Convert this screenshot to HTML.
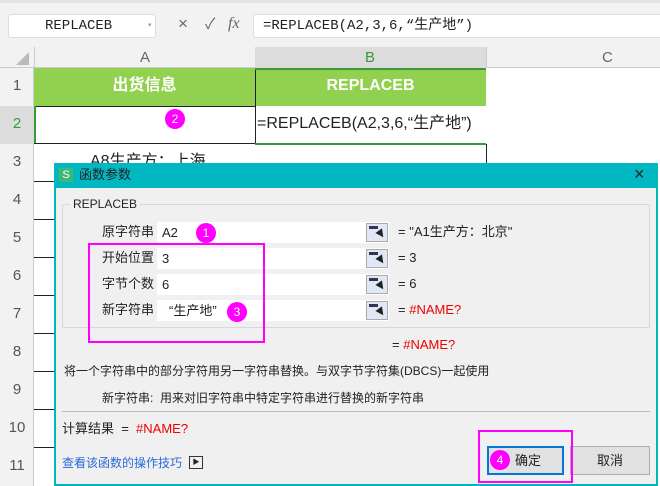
<!DOCTYPE html>
<html><head><meta charset="utf-8"><style>
*{margin:0;padding:0;box-sizing:border-box}
body{width:660px;height:486px;overflow:hidden;background:#fff;font-family:"Liberation Sans","Noto Sans CJK SC",sans-serif;position:relative;font-size:13px;color:#222;line-height:16px}
.a{position:absolute}
.c{position:absolute;border-radius:50%;background:#f0f;color:#fff;width:20px;height:20px;text-align:center;line-height:20px;font-size:12px}
.rn{position:absolute;left:0;width:34px;text-align:center;color:#555;font-size:15px;line-height:18px}
.lab{position:absolute;left:102px;font-size:13px;line-height:16px}
.inp{position:absolute;left:157px;width:232px;height:21px;background:#fff;font-size:13px;line-height:21px;padding-left:5px}
.btn{position:absolute;left:366px;width:22px;height:19px;background:#dfe8f4;border:1px solid #aaa}
.btn:before{content:"";position:absolute;left:2px;top:2px;width:9px;height:3px;background:#335}
.btn:after{content:"";position:absolute;left:10px;top:6px;width:0;height:0;border-left:4px solid transparent;border-right:4px solid transparent;border-top:8px solid #222;transform:rotate(-35deg)}
.eq{position:absolute;left:398px;font-size:13px;line-height:16px}
.red{color:#e00}
</style></head><body>
<div class="a" style="left:0;top:0;width:660px;height:47px;background:#f2f2f2"></div>
<div class="a" style="left:0;top:0;width:660px;height:3px;background:#e4e4e4"></div>
<div class="a" style="left:8px;top:14px;width:148px;height:24px;background:#fff;border:1px solid #ddd;border-radius:3px;font-family:'Liberation Mono',monospace;font-size:14px;line-height:22px;padding-left:36px">REPLACEB</div>
<div class="a" style="left:148px;top:18px;font-size:7px;color:#999">▾</div>
<div class="a" style="left:178px;top:16px;font-size:17px;color:#666">×</div>
<div class="a" style="left:205px;top:17px;font-size:15px;color:#666">✓</div>
<div class="a" style="left:228px;top:16px;font-size:16px;color:#666;font-style:italic;font-family:'Liberation Serif',serif">fx</div>
<div class="a" style="left:253px;top:14px;width:410px;height:24px;background:#fff;border:1px solid #ddd;border-radius:3px;font-family:'Liberation Mono','Noto Sans CJK SC',monospace;font-size:14px;line-height:22px;padding-left:9px">=REPLACEB(A2,3,6,“生产地”)</div>
<div class="a" style="left:0;top:47px;width:660px;height:21px;background:#f2f2f2;border-bottom:1px solid #ccc"></div>
<div class="a" style="left:255px;top:47px;width:231px;height:21px;background:#dcdcdc"></div>
<div class="a" style="left:34px;top:47px;width:1px;height:21px;background:#ccc"></div>
<div class="a" style="left:486px;top:47px;width:1px;height:21px;background:#ccc"></div>
<div class="a" style="left:140px;top:49px;color:#666;font-size:15px;line-height:18px">A</div>
<div class="a" style="left:365px;top:49px;color:#3a9a3a;font-size:15px;line-height:18px">B</div>
<div class="a" style="left:602px;top:49px;color:#666;font-size:15px;line-height:18px">C</div>
<div class="a" style="left:16px;top:52px;width:0;height:0;border-left:13px solid transparent;border-bottom:13px solid #bbb"></div>
<div class="a" style="left:0;top:68px;width:34px;height:418px;background:#f2f2f2;border-right:1px solid #ccc"></div>
<div class="a" style="left:0;top:106px;width:34px;height:38px;background:#dcdcdc"></div>
<div class="rn" style="top:77px">1</div><div class="rn" style="top:115px;color:#3a9a3a">2</div><div class="rn" style="top:153px">3</div><div class="rn" style="top:191px">4</div><div class="rn" style="top:229px">5</div><div class="rn" style="top:267px">6</div><div class="rn" style="top:305px">7</div><div class="rn" style="top:343px">8</div><div class="rn" style="top:381px">9</div><div class="rn" style="top:419px">10</div><div class="rn" style="top:457px">11</div>
<div class="a" style="left:34px;top:68px;width:452px;height:38px;background:#92d050"></div>
<div class="a" style="left:34px;top:77px;width:221px;text-align:center;color:#fff;font-weight:bold;font-size:16px;line-height:18px">出货信息</div>
<div class="a" style="left:255px;top:77px;width:231px;text-align:center;color:#fff;font-weight:bold;font-size:16px;line-height:18px">REPLACEB</div>
<div class="a" style="left:255px;top:68px;width:1px;height:76px;background:#222"></div>
<div class="a" style="left:255px;top:68px;width:231px;height:2px;background:#3a9a3a"></div>
<div class="a" style="left:34px;top:106px;width:221px;height:1px;background:#222"></div>
<div class="a" style="left:34px;top:106px;width:2px;height:38px;background:#3a9a3a"></div>
<div class="a" style="left:34px;top:143px;width:221px;height:1px;background:#222"></div>
<div class="a" style="left:255px;top:143px;width:231px;height:2px;background:#3a9a3a"></div>
<div class="a" style="left:486px;top:144px;width:1px;height:30px;background:#222"></div>
<div class="a" style="left:257px;top:115px;font-size:16px;line-height:18px">=REPLACEB(A2,3,6,“生产地”)</div>
<div class="a" style="left:90px;top:153px;font-size:16px;line-height:18px">A8生产方：上海</div>
<div class="a" style="left:34px;top:181px;width:20px;height:1px;background:#222"></div>
<div class="a" style="left:34px;top:219px;width:20px;height:1px;background:#222"></div>
<div class="a" style="left:34px;top:257px;width:20px;height:1px;background:#222"></div>
<div class="a" style="left:34px;top:295px;width:20px;height:1px;background:#222"></div>
<div class="a" style="left:34px;top:333px;width:20px;height:1px;background:#222"></div>
<div class="a" style="left:34px;top:371px;width:20px;height:1px;background:#222"></div>
<div class="a" style="left:34px;top:409px;width:20px;height:1px;background:#222"></div>
<div class="a" style="left:34px;top:447px;width:20px;height:1px;background:#222"></div>
<div class="c" style="left:165px;top:109px">2</div>
<div class="a" style="left:54px;top:163px;width:604px;height:323px;background:#f0f0f0;border:2px solid #00b4c0"></div>
<div class="a" style="left:54px;top:163px;width:604px;height:25px;background:#00b7c2"></div>
<div class="a" style="left:59px;top:168px;width:14px;height:14px;background:#3cb878;color:#fff;font-size:11px;text-align:center;line-height:14px">S</div>
<div class="a" style="left:79px;top:167px;font-size:13px">函数参数</div>
<div class="a" style="left:634px;top:164px;font-size:18px;line-height:20px">×</div>
<div class="a" style="left:62px;top:204px;width:588px;height:124px;border:1px solid #d8d8d8"></div>
<div class="a" style="left:70px;top:197px;background:#f0f0f0;padding:0 3px;font-size:12px;line-height:14px">REPLACEB</div>
<div class="lab" style="top:224px">原字符串</div><div class="inp" style="top:222px">A2</div><div class="btn" style="top:223px"></div><div class="eq" style="top:224px">= "A1生产方：北京"</div>
<div class="lab" style="top:250px">开始位置</div><div class="inp" style="top:248px">3</div><div class="btn" style="top:249px"></div><div class="eq" style="top:250px">= 3</div>
<div class="lab" style="top:276px">字节个数</div><div class="inp" style="top:274px">6</div><div class="btn" style="top:275px"></div><div class="eq" style="top:276px">= 6</div>
<div class="lab" style="top:302px">新字符串</div><div class="inp" style="top:300px;padding-left:12px">“生产地”</div><div class="btn" style="top:301px"></div><div class="eq" style="top:302px">= <span class="red">#NAME?</span></div>
<div class="a" style="left:392px;top:337px">= <span class="red">#NAME?</span></div>
<div class="a" style="left:64px;top:363px;font-size:12px">将一个字符串中的部分字符用另一字符串替换。与双字节字符集(DBCS)一起使用</div>
<div class="a" style="left:102px;top:390px;font-size:12px">新字符串:&nbsp; 用来对旧字符串中特定字符串进行替换的新字符串</div>
<div class="a" style="left:62px;top:411px;width:588px;height:1px;background:#bbb"></div>
<div class="a" style="left:62px;top:421px">计算结果 &nbsp;= &nbsp;<span class="red">#NAME?</span></div>
<div class="a" style="left:62px;top:455px;color:#2a6ad8;font-size:12px">查看该函数的操作技巧</div>
<div class="a" style="left:189px;top:456px;width:14px;height:13px;border:1px solid #333;font-size:7px;text-align:center;line-height:11px">▶</div>
<div class="a" style="left:487px;top:446px;width:77px;height:29px;background:#e1e1e1;border:2px solid #0078d7;line-height:25px;padding-left:26px">确定</div>
<div class="a" style="left:570px;top:446px;width:80px;height:29px;background:#e1e1e1;border:1px solid #adadad;text-align:center;line-height:27px">取消</div>
<div class="a" style="left:88px;top:243px;width:177px;height:100px;border:2px solid #f0f"></div>
<div class="a" style="left:478px;top:430px;width:95px;height:53px;border:2px solid #f0f"></div>
<div class="c" style="left:196px;top:223px">1</div>
<div class="c" style="left:227px;top:302px">3</div>
<div class="c" style="left:490px;top:450px">4</div>
</body></html>
